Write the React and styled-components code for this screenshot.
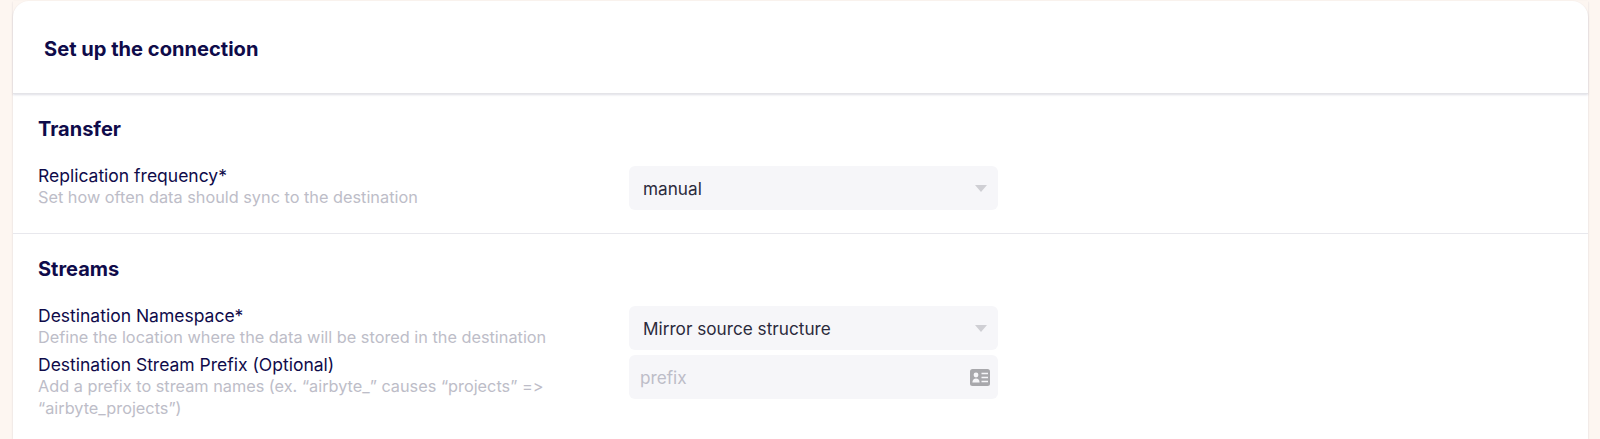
import React from "react";
import styled, { createGlobalStyle } from "styled-components";

const GlobalStyle = createGlobalStyle`
  html, body {
    margin: 0;
    height: 439px;
    overflow: hidden;
    background: #fdf6f1;
    font-family: Inter, "Liberation Sans", sans-serif;
    font-variant-ligatures: none;
    font-feature-settings: "calt" 0;
  }
`;

const Page = styled.div`
  padding: 1px 12px 0 13px;
`;

const Card = styled.div`
  background: #ffffff;
  border-radius: 16px 16px 0 0;
  box-shadow: 0 1px 2px rgba(26, 25, 77, 0.18);
  height: 438px;
`;

const Header = styled.div`
  height: 93px;
  padding: 3px 31px 0;
  box-sizing: border-box;
  display: flex;
  align-items: center;
  border-bottom: 1px solid #e4e4e8;
  box-shadow: 0 1px 2px rgba(26, 25, 77, 0.14);
`;

const Title = styled.h1`
  margin: 0;
  font-size: 20.1px;
  font-weight: 700;
  color: #0f0b4a;
`;

const Section = styled.section`
  padding: ${(p) => p.$top}px 25px ${(p) => p.$bottom}px;
  border-bottom: ${(p) => (p.$last ? "none" : "1px solid #e8e8ed")};
`;

const SectionTitle = styled.h2`
  margin: 0 0 25px;
  font-size: 20px;
  line-height: 24px;
  font-weight: 700;
  color: #0f0b4a;
`;

const Row = styled.div`
  display: grid;
  grid-template-columns: 591px 369px;
  margin-bottom: 5px;
`;

const TextColumn = styled.div`
  margin-top: -1px;
`;

const Label = styled.label`
  display: block;
  font-size: 17.5px;
  line-height: 21px;
  color: #0f0b4a;
`;

const Hint = styled.div`
  width: 520px;
  font-size: 16.3px;
  line-height: 22px;
  color: #bdbdc8;
`;

const Field = styled.div`
  height: 44px;
  border-radius: 6px;
  background: #f6f6f9;
  display: flex;
  align-items: center;
  justify-content: space-between;
  box-sizing: border-box;
  padding: 0 ${(p) => p.$right}px 0 ${(p) => p.$left}px;
  font-size: 17.2px;
  color: ${(p) => (p.$placeholder ? "#bdbdc8" : "#2b2a3c")};
`;

const Caret = styled.span`
  width: 0;
  height: 0;
  border-left: 6px solid transparent;
  border-right: 6px solid transparent;
  border-top: 7px solid #cfcfd4;
`;

const CardIcon = () => (
  <svg width="20" height="17" viewBox="0 0 20 17" fill="none">
    <rect width="20" height="17" rx="2.5" fill="#a8a8ac" />
    <circle cx="6" cy="6" r="2.4" fill="#f6f6f9" />
    <path d="M2.4 13.4c0-2.6 1.5-4 3.6-4s3.6 1.4 3.6 4z" fill="#f6f6f9" />
    <path d="M11.5 4.5h6.5M11.5 8.5h6.5M11.5 12.5h6.5" stroke="#f6f6f9" strokeWidth="1.5" />
  </svg>
);

const FormRow = ({ label, hint, children }) => (
  <Row>
    <TextColumn>
      <Label>{label}</Label>
      <Hint>{hint}</Hint>
    </TextColumn>
    {children}
  </Row>
);

const Select = ({ value }) => (
  <Field $left={14} $right={11}>
    {value}
    <Caret />
  </Field>
);

export default function App() {
  return (
    <Page>
      <GlobalStyle />
      <Card>
        <Header>
          <Title>Set up the connection</Title>
        </Header>
        <Section $top={23} $bottom={18}>
          <SectionTitle>Transfer</SectionTitle>
          <FormRow
            label="Replication frequency*"
            hint="Set how often data should sync to the destination"
          >
            <Select value="manual" />
          </FormRow>
        </Section>
        <Section $top={23} $bottom={0} $last>
          <SectionTitle>Streams</SectionTitle>
          <FormRow
            label="Destination Namespace*"
            hint="Define the location where the data will be stored in the destination"
          >
            <Select value="Mirror source structure" />
          </FormRow>
          <FormRow
            label="Destination Stream Prefix (Optional)"
            hint="Add a prefix to stream names (ex. “airbyte_” causes “projects” => “airbyte_projects”)"
          >
            <Field $left={11} $right={8} $placeholder>
              prefix
              <CardIcon />
            </Field>
          </FormRow>
        </Section>
      </Card>
    </Page>
  );
}
